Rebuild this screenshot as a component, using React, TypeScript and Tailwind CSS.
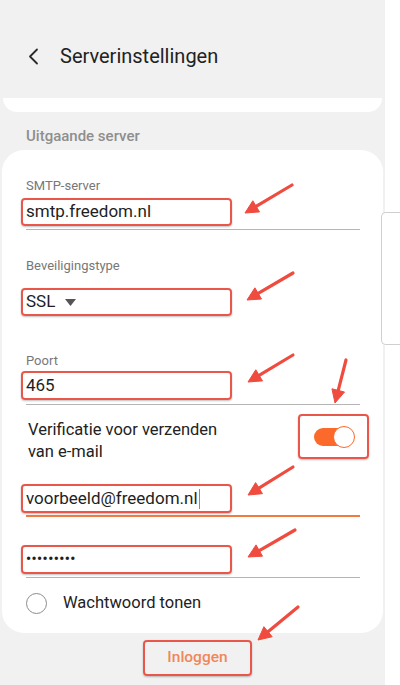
import React from "react";

const arrows: [number, number, number, number][] = [
  [292, 185, 245, 213],
  [293, 273, 247, 300],
  [293, 355, 248, 382],
  [346, 360, 335, 403],
  [293, 467, 248, 495],
  [295, 530, 248, 557],
  [298, 607, 258, 640],
];

function Arrows() {
  return (
    <svg className="absolute left-0 top-0 pointer-events-none" width={400} height={685} viewBox="0 0 400 685">
      {arrows.map(([x1, y1, x2, y2], i) => {
        const dx = x2 - x1;
        const dy = y2 - y1;
        const len = Math.hypot(dx, dy);
        const ux = dx / len;
        const uy = dy / len;
        const hl = 13;
        const hw = 6.5;
        const bx = x2 - ux * hl;
        const by = y2 - uy * hl;
        const px = -uy;
        const py = ux;
        return (
          <g key={i}>
            <line x1={x1} y1={y1} x2={bx + ux * 2} y2={by + uy * 2} stroke="#ef4b3f" strokeWidth={3.2} strokeLinecap="round" />
            <polygon
              points={`${x2},${y2} ${bx + px * hw},${by + py * hw} ${bx - px * hw},${by - py * hw}`}
              fill="#ef4b3f"
              stroke="#ef4b3f"
              strokeWidth={1}
              strokeLinejoin="round"
            />
          </g>
        );
      })}
    </svg>
  );
}

function Box({ children, h = "h-[28px]" }: { children: React.ReactNode; h?: string }) {
  return (
    <div className={`ml-[19px] w-[211px] ${h} border-2 border-[#e9574b] rounded-[4px] flex items-center pl-[3px] shadow-[0_1px_2px_rgba(0,0,0,0.25)] text-[17px] text-[#1e1e1e]`}>
      {children}
    </div>
  );
}

export default function App() {
  return (
    <div className="relative w-[400px] h-[685px] overflow-hidden flex bg-white" style={{ fontFamily: "Roboto, 'Noto Sans', sans-serif" }}>
      <div className="w-[385px] h-full bg-[#f1f1f1] flex flex-col">
        {/* header */}
        <div className="h-[98px] flex items-start pt-[45px]">
          <svg className="ml-[28px] mt-[3px]" width="11" height="17" viewBox="0 0 11 17">
            <polyline points="9,1.5 2,8.5 9,15.5" fill="none" stroke="#2a2a2a" strokeWidth="1.8" strokeLinecap="round" strokeLinejoin="round" />
          </svg>
          <div className="ml-[21px] text-[20px] leading-[22px] text-[#222]">Serverinstellingen</div>
        </div>
        {/* top card bottom */}
        <div className="mx-[3px] h-[14px] bg-white rounded-b-[20px]" />
        <div className="h-[38px] flex items-end pl-[26px] pb-[6px] text-[15px] leading-[16px] font-medium text-[#8e8e8e]">Uitgaande server</div>
        {/* main card */}
        <div className="mx-[2px] bg-white rounded-[22px] pt-[28px] pb-[17px] flex flex-col">
          <div className="ml-[24px] text-[13px] leading-[16px] text-[#777]">SMTP-server</div>
          <div className="mt-[4px]"><Box>smtp.freedom.nl</Box></div>
          <div className="mt-[3px] ml-[24px] w-[334px] h-px bg-[#b5b5b5]" />
          <div className="mt-[28px] ml-[24px] text-[13px] leading-[16px] text-[#777]">Beveiligingstype</div>
          <div className="mt-[14px]">
            <Box>
              <span>SSL</span>
              <svg className="ml-[10px]" width="11" height="7" viewBox="0 0 11 7">
                <polygon points="0,0 11,0 5.5,7" fill="#555" />
              </svg>
            </Box>
          </div>
          <div className="mt-[37px] ml-[24px] text-[13px] leading-[16px] text-[#777]">Poort</div>
          <div className="mt-[2px]"><Box h="h-[29px]">465</Box></div>
          <div className="mt-[4px] ml-[24px] w-[334px] h-px bg-[#b5b5b5]" />
          <div className="mt-[9px] flex items-start">
            <div className="ml-[26px] mt-[5px] text-[16.5px] leading-[22px] text-[#222] w-[240px]">
              Verificatie voor verzenden
              <br />
              van e-mail
            </div>
            <div className="ml-[30px] w-[71px] h-[45px] border-2 border-[#e9574b] rounded-[4px] shadow-[0_1px_2px_rgba(0,0,0,0.25)] flex items-center justify-center">
              <div className="relative w-[40px] h-[18px] rounded-full bg-[#fb6a2b] flex items-center justify-end">
                <div className="w-[22px] h-[22px] rounded-full bg-white border-[1.5px] border-[#fb6a2b] -mr-[1px]" />
              </div>
            </div>
          </div>
          <div className="mt-[21px]">
            <Box h="h-[29px]">
              <span>voorbeeld@freedom.nl</span>
              <span className="ml-px w-[1.5px] h-[20px] bg-[#f06a2a]" />
            </Box>
          </div>
          <div className="mt-[2px] ml-[24px] w-[334px] h-[1.5px] bg-[#f07a40]" />
          <div className="mt-[28px]">
            <Box h="h-[29px]">
              <span className="text-[14px] tracking-[0.5px] font-bold leading-none">•••••••••</span>
            </Box>
          </div>
          <div className="mt-[3px] ml-[24px] w-[334px] h-px bg-[#b5b5b5]" />
          <div className="mt-[14px] h-[24px] flex items-center">
            <div className="ml-[24px] w-[21px] h-[21px] rounded-full border-[1.5px] border-[#8c8c8c]" />
            <div className="ml-[16px] text-[16.5px] text-[#222]">Wachtwoord tonen</div>
          </div>
        </div>
        <div className="mt-[7px] ml-[143px] w-[109px] h-[36px] border-2 border-[#e9574b] rounded-[4px] shadow-[0_1px_2px_rgba(0,0,0,0.25)] flex items-center justify-center text-[15.5px] font-medium text-[#f0875a]">
          Inloggen
        </div>
      </div>
      <div className="w-[15px] h-full bg-white flex flex-col">
        <div className="mt-[212px] -ml-[4px] w-[19px] h-[133px] border-l border-t border-b border-[#cfcfcf] rounded-l-[5px] bg-white" />
      </div>
      <Arrows />
    </div>
  );
}
